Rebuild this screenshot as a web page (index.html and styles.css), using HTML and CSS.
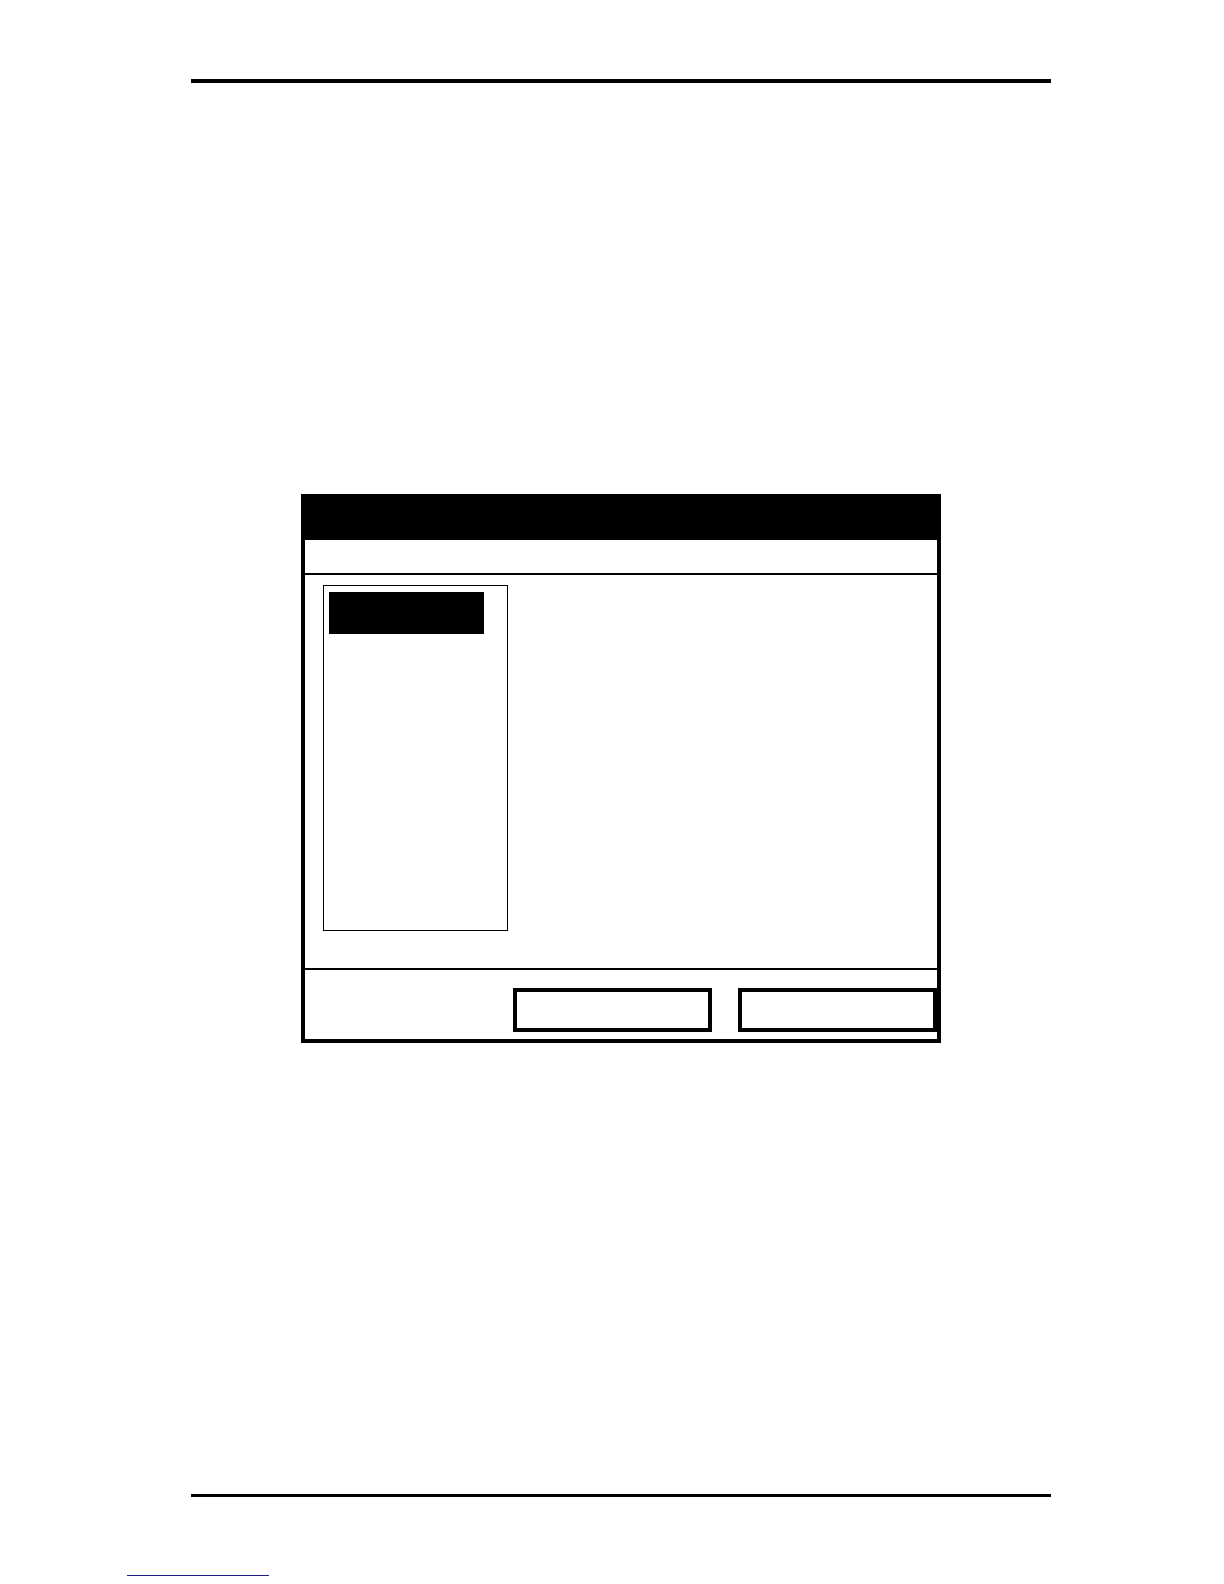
FILE: index.html
```html
<!DOCTYPE html>
<html lang="en">
<head>
<meta charset="utf-8">
<title>Dialog</title>
<link rel="stylesheet" href="styles.css">
</head>
<body>
<div class="page">
  <div class="rule rule-top"></div>
  <div class="dialog">
    <div class="dialog-title"></div>
    <div class="dialog-sub"></div>
    <div class="dialog-body">
      <div class="listbox">
        <div class="list-item selected"></div>
      </div>
    </div>
    <div class="dialog-foot">
      <div class="btn"></div>
      <div class="btn"></div>
    </div>
  </div>
  <div class="rule rule-bottom"></div>
  <div class="link-line"></div>
</div>
</body>
</html>
```

FILE: styles.css
```css
html, body {
  margin: 0;
  padding: 0;
  background: #fff;
  font-family: "Liberation Sans", Arial, sans-serif;
}

.page {
  width: 1224px;
  height: 1584px;
  overflow: hidden;
  display: flow-root;
}

.rule {
  width: 860px;
  margin-left: 191px;
  background: #000;
}

.rule-top {
  margin-top: 79px;
  height: 4px;
}

.dialog {
  margin: 411px 0 0 301px;
  width: 640px;
  box-sizing: border-box;
  border: 4px solid #000;
  border-top: 0;
}

.dialog-title {
  height: 46px;
  background: #000;
}

.dialog-sub {
  height: 33px;
  border-bottom: 2px solid #000;
}

.dialog-body {
  height: 393px;
  box-sizing: border-box;
  padding: 10px 0 0 18px;
}

.listbox {
  width: 185px;
  height: 346px;
  box-sizing: border-box;
  border: 1px solid #000;
  padding: 6px 0 0 5px;
}

.list-item {
  width: 155px;
  height: 42px;
}

.list-item.selected {
  background: #000;
}

.dialog-foot {
  border-top: 2px solid #000;
  padding: 18px 0 7px;
  display: flex;
  justify-content: flex-end;
  gap: 26px;
}

.btn {
  width: 199px;
  height: 44px;
  box-sizing: border-box;
  border: 4px solid #000;
}

.rule-bottom {
  margin-top: 451px;
  height: 3px;
}

.link-line {
  margin: 78px 0 0 127px;
  width: 142px;
  height: 1px;
  background: #1c1c8c;
}
```
